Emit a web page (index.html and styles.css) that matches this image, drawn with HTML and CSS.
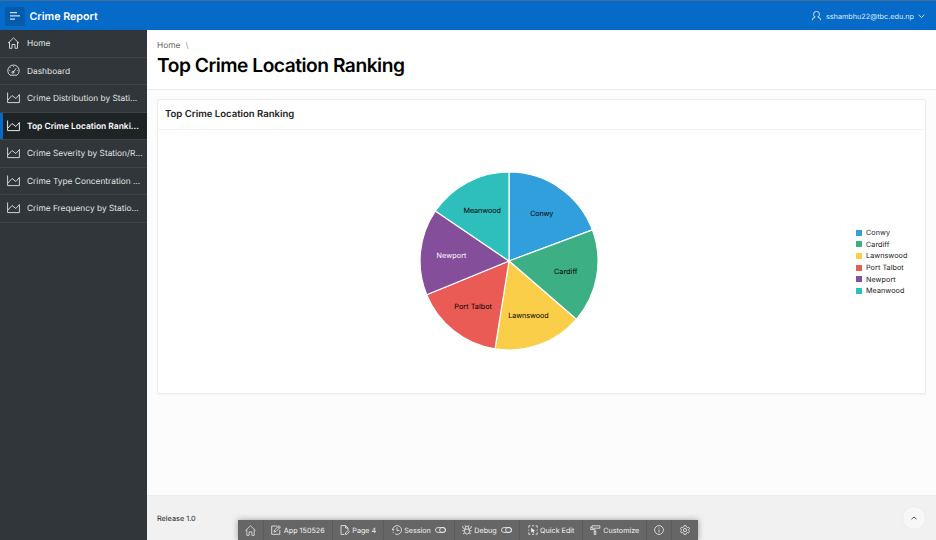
FILE: index.html
```html
<!DOCTYPE html>
<html lang="en">
<head>
<meta charset="utf-8">
<title>Top Crime Location Ranking</title>
<link rel="stylesheet" href="styles.css">
</head>
<body>
<svg class="defs" width="0" height="0">
  <symbol id="chart" viewBox="0 0 13 12"><path d="M.6.5V10.6H12.4V2.5L8.9 6.5 5 3.5.8 8.2"/></symbol>
  <symbol id="home" viewBox="0 0 12 12"><path d="M.5 6.2 6 .9l5.500 5.300M2 5v6.300h2.500V7.500h3v3.800H10V5"/></symbol>
</svg>
<div class="app">
  <header class="topbar">
    <button class="menu" aria-label="Menu"><svg width="10" height="8" viewBox="0 0 10 8"><path d="M0 .7h7M0 3.900h10M0 7.100h5"/></svg></button>
    <span class="brand">Crime Report</span>
    <div class="user">
      <svg width="9" height="10" viewBox="0 0 9 10"><path d="M2.900 6C1.500 4.900 1.600 3.900 1.600 3A2.900 2.600 0 0 1 7.400 3C7.400 3.900 7.500 4.900 6.100 6M3 5.400V6.300L.8 7.300.5 9.300M6 5.400V6.300L8.200 7.300 8.500 9.300"/></svg>
      <span class="mail">sshambhu22@tbc.edu.np</span>
      <svg width="7" height="5" viewBox="0 0 7 5"><path d="M.6.8 3.500 3.500 6.400.8"/></svg>
    </div>
  </header>
  <div class="body">
    <nav class="side">
      <a class="item"><svg width="13" height="12"><use href="#home"/></svg><span>Home</span></a>
      <a class="item"><svg width="13" height="13" viewBox="0 0 13 13"><path d="M3 11.200A5.700 5.700 0 1 1 10 11.200ZM6.100 8.600 9.200 4.200M6.500 2v.8M2.300 6.500h.8M3.500 3.500l.5.5M9.900 6.500h.8"/><circle cx="5.900" cy="8.300" r="1"/></svg><span>Dashboard</span></a>
      <a class="item"><svg width="13" height="12"><use href="#chart"/></svg><span>Crime Distribution by Stati...</span></a>
      <a class="item active"><svg width="13" height="12"><use href="#chart"/></svg><span>Top Crime Location Ranki...</span></a>
      <a class="item"><svg width="13" height="12"><use href="#chart"/></svg><span>Crime Severity by Station/R...</span></a>
      <a class="item"><svg width="13" height="12"><use href="#chart"/></svg><span>Crime Type Concentration ...</span></a>
      <a class="item"><svg width="13" height="12"><use href="#chart"/></svg><span>Crime Frequency by Statio...</span></a>
    </nav>
    <main class="main">
      <div class="title">
        <div class="crumb">Home<i>\</i></div>
        <h1>Top Crime Location Ranking</h1>
      </div>
      <div class="content">
        <section class="card">
          <h2>Top Crime Location Ranking</h2>
          <div class="plot">
            <svg class="pie" width="180" height="180" viewBox="419 171.300 180 180">
              <path fill="#309fdb" d="M509 261.300V172.300A89 89 0 0 1 592.400 230.200Z"/>
              <path fill="#3caf85" d="M509 261.300 592.400 230.200A89 89 0 0 1 576.300 319.600Z"/>
              <path fill="#fbce4a" d="M509 261.300 576.300 319.600A89 89 0 0 1 495 349.200Z"/>
              <path fill="#e95b54" d="M509 261.300 495 349.200A89 89 0 0 1 426.700 295Z"/>
              <path fill="#854e9b" d="M509 261.300 426.700 295A89 89 0 0 1 435.400 211.300Z"/>
              <path fill="#2ebfbc" d="M509 261.300 435.400 211.300A89 89 0 0 1 509 172.300Z"/>
              <text x="530.300" y="216.100" textLength="23">Conwy</text>
              <text x="554" y="274.100" textLength="23.500">Cardiff</text>
              <text x="508.300" y="318.100" textLength="40.300">Lawnswood</text>
              <text x="454.300" y="308.900" textLength="37.600">Port Talbot</text>
              <text class="light" x="436.600" y="258.100" textLength="29.800">Newport</text>
              <text x="463.500" y="213.100" textLength="37.300">Meanwood</text>
            </svg>
            <ul class="legend">
              <li class="c1">Conwy</li><li class="c2">Cardiff</li><li class="c3">Lawnswood</li>
              <li class="c4">Port Talbot</li><li class="c5">Newport</li><li class="c6">Meanwood</li>
            </ul>
          </div>
        </section>
      </div>
      <footer class="footer"><span>Release 1.0</span>
        <button class="up" aria-label="Back to top"><svg width="6" height="4" viewBox="0 0 6 4"><path d="M.5 3.200 3 1l2.500 2.200"/></svg></button>
      </footer>
    </main>
  </div>
  <div class="dev">
    <a class="w1"><svg width="11" height="11"><use href="#home"/></svg></a>
    <a class="w2"><svg width="10" height="10" viewBox="0 0 10 10"><path d="M6 1H.7v8.300H8.800V5M3 7l.5-2L8 .7l1.400 1.400L5 6.500ZM7 1.700l1.400 1.400"/></svg><span>App 150526</span></a>
    <a class="w3"><svg width="10" height="10" viewBox="0 0 10 10"><path d="M4.500 9.400H1V.6h4.500L8 3v2M5.500.6V3H8M5.500 9.300V8L8 5.400l1.300 1.300L6.800 9.300Z"/></svg><span>Page 4</span></a>
    <a class="w4"><svg width="10" height="10" viewBox="0 0 10 10"><path d="M.7 5A4.400 4.400 0 1 1 3 8.900M.4 3.800.9 5.300 2.300 4.600M5 2.300V5.500H7.500M.9 7l.5.8"/></svg><span>Session</span><svg class="switch" width="11" height="6" viewBox="0 0 11 6"><rect x=".5" y=".6" width="10" height="4.800" rx="2.400"/><rect x="4.600" y=".6" width="5.900" height="4.800" rx="2.400"/></svg></a>
    <a class="w5"><svg width="10" height="10" viewBox="0 0 10 10"><path d="M2.700 4.200h4.600v2.600a2.300 2.300 0 0 1-4.600 0ZM3.200 4V3a1.800 1.800 0 0 1 3.600 0V4M2.700 5.800H.4M9.600 5.800H7.300M2.700 4.200.8 2.700V1M7.300 4.200l1.900-1.500V1M3 7.600 1 9M7 7.600 9 9M3.500 1.300 3 .3M6.500 1.300 7 .3"/></svg><span>Debug</span><svg class="switch" width="11" height="6" viewBox="0 0 11 6"><rect x=".5" y=".6" width="10" height="4.800" rx="2.400"/><rect x="4.600" y=".6" width="5.900" height="4.800" rx="2.400"/></svg></a>
    <a class="w6"><svg width="10" height="10" viewBox="0 0 10 10"><path d="M2.400.8H.8v2M.8 4.500v1.200M.8 7.300v2h1.600M7.600.8h1.600v2M9.200 4.500v1.200M9.200 7.300v2H7.600M4 .8h2M4 9.300h2"/><path class="solid" d="M3.200 2.700v4.800l1.300-1 1 1.700.8-.4-.8-1.600 1.600-.2Z"/></svg><span>Quick Edit</span></a>
    <a class="w7"><svg width="11" height="10" viewBox="0 0 11 10"><path d="M2 .8h7.800v2.400H2ZM2 2H.7v2.600H5V6M4.200 6h1.600v3.500H4.200Z"/></svg><span>Customize</span></a>
    <a class="w8"><svg width="10" height="10" viewBox="0 0 10 10"><circle cx="5" cy="5" r="4.400"/><path d="M5 4.500V7.500M5 2.500v1"/></svg></a>
    <a class="w9"><svg width="10" height="10" viewBox="0 0 10 10"><circle cx="5" cy="5" r="1.600"/><path d="M4.100.6h1.800l.4 1.300 1 .6 1.300-.3.900 1.500-.9 1V5.300l.9 1-.9 1.500-1.300-.3-1 .6-.4 1.300H4.100l-.4-1.300-1-.6-1.300.3-.9-1.500.9-1V4.700l-.9-1 .9-1.500 1.300.3 1-.6Z"/></svg></a>
  </div>
</div>
</body>
</html>
```
FILE: styles.css
```css
* { box-sizing: border-box; }
body { margin: 0; font-family: Inter, "Liberation Sans", sans-serif; color: #222; text-rendering: geometricPrecision; }
svg { display: block; flex: none; fill: none; stroke: currentColor; stroke-width: 1; }
button { padding: 0; border: 0; color: inherit; }
.defs { position: absolute; }
.app { width: 936px; height: 540px; display: flex; flex-direction: column; overflow: hidden; }
.topbar { height: 30px; flex: none; display: flex; align-items: center; padding: 1px 11.500px 0 5px; background: #056ac8; border-top: 1px solid #456b91; color: #fff; }
.menu { width: 20px; height: 19px; background: #055baa; border-radius: 2px; display: flex; align-items: center; justify-content: center; }
.brand { margin-left: 4.500px; font-size: 10.700px; font-weight: 600; }
.user { margin-left: auto; display: flex; align-items: center; font-size: 7.250px; color: #dcebf9; }
.user svg { stroke-width: .9; }
.mail { margin: 0 3.500px 0 4.500px; }
.body { flex: 1; display: flex; min-height: 0; }
.side { width: 147px; flex: none; background: #303639; }
.item { height: 27.500px; display: flex; align-items: center; padding-left: 7px; gap: 7px; border-bottom: 1px solid #3d4346; font-size: 8.350px; color: #e3e5e6; white-space: nowrap; }
.item span { padding-top: 2px; }
.item svg { stroke-width: .9; }
.item.active { background: #1e2326; color: #fff; font-size: 8.450px; font-weight: 600; box-shadow: inset 3px 0 #056ac8; }
.main { flex: 1; display: flex; flex-direction: column; background: #fcfcfc; min-width: 0; }
.title { height: 60px; padding: 10px 10px 0; background: #fff; border-bottom: 1px solid #ebebeb; }
.crumb { height: 12px; line-height: 12px; font-size: 8.400px; color: #666; }
.crumb i { margin-left: 5px; font-style: normal; color: #999; }
h1 { margin: 1px 0 0; font-size: 19.200px; letter-spacing: -.48px; line-height: 24px; font-weight: 600; color: #000; }
.content { flex: 1; padding: 9px 10px 0 10px; }
.card { height: 295px; background: #fff; border: 1px solid #ededed; border-radius: 2px; box-shadow: 0 1px 2px #0000000a; }
h2 { margin: 0; height: 30px; padding-left: 7px; border-bottom: 1px solid #f3f3f3; font-size: 9.550px; line-height: 29px; font-weight: 600; }
.plot { display: flex; align-items: flex-start; padding: 41.300px 0 0 261px; }
.pie path { stroke: #fff; stroke-width: 1.200; stroke-linejoin: round; }
.pie text { font-size: 7.200px; fill: #000; stroke: none; }
.pie .light { fill: #fff; }
.legend { list-style: none; margin: 55.500px 0 0 257px; padding: 0; font-size: 7.200px; letter-spacing: .07px; }
.legend li { height: 11.650px; display: flex; align-items: center; gap: 4px; white-space: nowrap; }
.legend li::before { content: ""; width: 6px; height: 6px; background: var(--c); }
.c1 { --c: #309fdb; } .c2 { --c: #3caf85; } .c3 { --c: #fbce4a; }
.c4 { --c: #e95b54; } .c5 { --c: #854e9b; } .c6 { --c: #2ebfbc; }
.footer { height: 45px; padding: 0 10px; display: flex; align-items: center; justify-content: space-between; background: #f1f1f1; border-top: 1px solid #ececec; font-size: 7.300px; }
.up { width: 24px; height: 24px; border-radius: 50%; background: #f7f7f7; border: 1px solid #ececec; display: flex; align-items: center; justify-content: center; color: #555; }
.dev { position: absolute; left: 238px; top: 520px; width: 460px; height: 20px; display: flex; background: #666; color: #f2f2f2; box-shadow: 0 0 6px #00000059; font-size: 7.200px; }
.dev a { display: flex; align-items: center; justify-content: center; gap: 2.500px; border-right: 1px solid #5b5b5b; white-space: nowrap; }
.dev a:last-child { border: 0; }
.dev svg { stroke-width: .8; }
.dev .switch { margin-left: 2px; }
.solid { fill: currentColor; stroke: none; }
.w1 { width: 26px; } .w2 { width: 69px; } .w3 { width: 51px; } .w4 { width: 71px; } .w5 { width: 65px; }
.w6 { width: 63px; } .w7 { width: 64px; } .w8 { width: 25px; } .w9 { width: 26px; }
```
